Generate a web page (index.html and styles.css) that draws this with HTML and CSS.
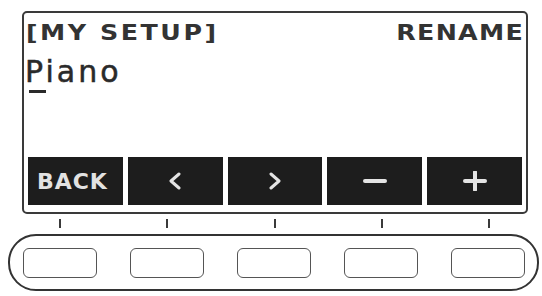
FILE: index.html
```html
<!DOCTYPE html>
<html>
<head>
<meta charset="utf-8">
<link rel="stylesheet" href="styles.css">
</head>
<body>
<div class="panel">
  <div class="screen">
    <div class="header">
      <span class="title">[MY SETUP]</span>
      <span class="mode">RENAME</span>
    </div>
    <div class="name">Piano</div>
    <div class="cursor"></div>
    <div class="softkeys">
      <div class="key"><span class="key-label">BACK</span></div>
      <div class="key">
        <svg class="glyph" width="16" height="18" viewBox="0 0 16 18"><polyline points="12,2 4,9 12,16" fill="none" stroke="#e4e4e4" stroke-width="3" stroke-linecap="round" stroke-linejoin="round"/></svg>
      </div>
      <div class="key">
        <svg class="glyph" width="16" height="18" viewBox="0 0 16 18"><polyline points="4,2 12,9 4,16" fill="none" stroke="#e4e4e4" stroke-width="3" stroke-linecap="round" stroke-linejoin="round"/></svg>
      </div>
      <div class="key">
        <svg class="glyph" width="24" height="18" viewBox="0 0 24 18"><line x1="2" y1="9" x2="22" y2="9" stroke="#e4e4e4" stroke-width="4" stroke-linecap="round"/></svg>
      </div>
      <div class="key">
        <svg class="glyph" width="24" height="20" viewBox="0 0 24 20"><line x1="2" y1="10" x2="22" y2="10" stroke="#e4e4e4" stroke-width="4" stroke-linecap="round"/><line x1="12" y1="1" x2="12" y2="19" stroke="#e4e4e4" stroke-width="4" stroke-linecap="round"/></svg>
      </div>
    </div>
  </div>
  <div class="ticks">
    <div class="tick-cell"><span class="tick"></span></div>
    <div class="tick-cell"><span class="tick"></span></div>
    <div class="tick-cell"><span class="tick"></span></div>
    <div class="tick-cell"><span class="tick"></span></div>
    <div class="tick-cell"><span class="tick"></span></div>
  </div>
  <div class="buttons">
    <div class="button"></div>
    <div class="button"></div>
    <div class="button"></div>
    <div class="button"></div>
    <div class="button"></div>
  </div>
</div>
</body>
</html>
```

FILE: styles.css
```css
html, body {
  margin: 0;
  padding: 0;
  background: #ffffff;
}

body {
  width: 542px;
  height: 296px;
  overflow: hidden;
  font-family: "DejaVu Sans", "Liberation Sans", sans-serif;
  color: #2c2c2c;
}

.panel {
  display: flex;
  flex-direction: column;
  padding-top: 11px;
}

.screen {
  box-sizing: border-box;
  width: 506px;
  height: 203px;
  margin-left: 22px;
  border: 2px solid #3a3a3a;
  border-radius: 5px;
  padding: 8px 4px 7px 4px;
  display: flex;
  flex-direction: column;
}

.header {
  display: flex;
  justify-content: space-between;
  font-size: 22px;
  font-weight: 700;
  line-height: 24px;
  color: #333333;
}

.title {
  display: inline-block;
  margin-left: -2px;
  letter-spacing: 2.2px;
  transform: scaleX(1.15);
  transform-origin: left center;
}

.mode {
  display: inline-block;
  margin-right: -2px;
  letter-spacing: 1.1px;
  transform: scaleX(1.15);
  transform-origin: right center;
}

.name {
  margin-top: 10px;
  margin-left: -3px;
  font-size: 30px;
  line-height: 34px;
  letter-spacing: 3px;
  color: #2a2a2a;
  -webkit-text-stroke: 0.5px #2a2a2a;
}

.cursor {
  width: 17px;
  height: 3px;
  margin-left: 1px;
  margin-top: 1px;
  background: #2a2a2a;
}

.softkeys {
  margin-top: auto;
  display: flex;
  gap: 5px;
  height: 48px;
}

.key {
  flex: 1;
  background: #1d1d1d;
  display: flex;
  align-items: center;
  justify-content: center;
}

.key-label {
  font-size: 22px;
  font-weight: 700;
  letter-spacing: 1px;
  color: #e2e2e2;
  margin-right: 6px;
}

.glyph {
  display: block;
}

.ticks {
  display: flex;
  justify-content: space-between;
  width: 530px;
  box-sizing: border-box;
  margin-left: 8px;
  padding: 0 12px 0 15px;
  height: 20px;
}

.tick-cell {
  width: 74px;
  display: flex;
  justify-content: center;
}

.tick {
  display: block;
  width: 2px;
  height: 9px;
  margin-top: 5px;
  background: #3a3a3a;
}

.buttons {
  box-sizing: border-box;
  width: 531px;
  height: 57px;
  margin-left: 8px;
  border: 2px solid #333333;
  border-radius: 28px;
  padding: 0 12px 0 13px;
  display: flex;
  justify-content: space-between;
  align-items: center;
}

.button {
  box-sizing: border-box;
  width: 74px;
  height: 30px;
  border: 1.5px solid #555555;
  border-radius: 6px;
  margin-top: 1px;
}
```
